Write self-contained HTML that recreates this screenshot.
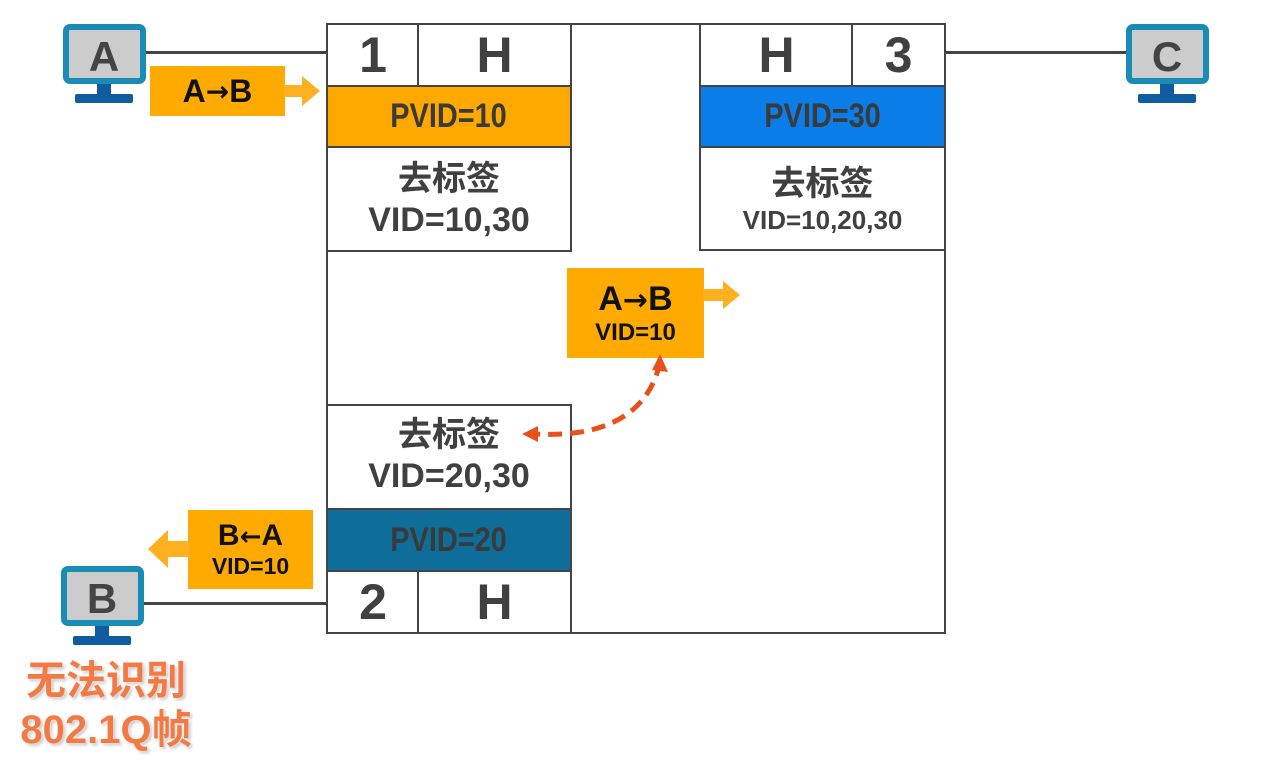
<!DOCTYPE html><html><head><meta charset="utf-8"><style>
body{margin:0;width:1270px;height:768px;background:#fff;position:relative;overflow:hidden;font-family:"Liberation Sans","Noto Sans CJK SC",sans-serif}
.a{position:absolute;box-sizing:border-box}
.c{display:flex;align-items:center;justify-content:center;text-align:center}
.big{font-size:50px;font-weight:bold;color:#404040}
.pv{font-size:34px;color:#3a3a3a;transform:scaleX(.85);font-weight:bold;display:inline-block}
.t{color:#404040;font-weight:bold;line-height:1.2}
.tag{background:#FFAA00;color:#111;font-weight:bold}
.ar{font-family:"DejaVu Sans",sans-serif;font-weight:bold}
</style></head><body>
<div class="a" style="left:140px;top:51px;width:190px;height:3px;background:#444"></div>
<div class="a" style="left:943px;top:51px;width:190px;height:3px;background:#444"></div>
<div class="a" style="left:138px;top:602px;width:192px;height:3px;background:#444"></div>
<div class="a" style="left:326px;top:23px;width:620px;height:611px;border:2px solid #444"></div>
<div class="a" style="left:326px;top:23px;width:246px;height:229px;border:2px solid #444;background:#fff"></div>
<div class="a c big" style="left:328px;top:25px;width:90px;height:60px">1</div>
<div class="a" style="left:417px;top:25px;width:2px;height:60px;background:#444"></div>
<div class="a c big" style="left:419px;top:25px;width:151px;height:60px">H</div>
<div class="a c" style="left:326px;top:85px;width:246px;height:63px;background:#FFA800;border:2px solid #444"><span class="pv">PVID=10</span></div>
<div class="a c t" style="left:328px;top:152px;width:242px;height:96px;font-size:34px;flex-direction:column"><div>去标签</div><div>VID=10,30</div></div>
<div class="a" style="left:699px;top:23px;width:247px;height:228px;border:2px solid #444;background:#fff"></div>
<div class="a c big" style="left:701px;top:25px;width:151px;height:60px">H</div>
<div class="a" style="left:851px;top:25px;width:2px;height:60px;background:#444"></div>
<div class="a c big" style="left:853px;top:25px;width:91px;height:60px">3</div>
<div class="a c" style="left:699px;top:85px;width:247px;height:63px;background:#0A7DE8;border:2px solid #444"><span class="pv">PVID=30</span></div>
<div class="a c t" style="left:701px;top:155px;width:243px;height:90px;flex-direction:column"><div style="font-size:34px">去标签</div><div style="font-size:26px">VID=10,20,30</div></div>
<div class="a" style="left:326px;top:404px;width:246px;height:230px;border:2px solid #444;background:#fff"></div>
<div class="a c t" style="left:328px;top:408px;width:242px;height:96px;font-size:34px;flex-direction:column"><div>去标签</div><div>VID=20,30</div></div>
<div class="a c" style="left:326px;top:508px;width:246px;height:64px;background:#0E6E99;border:2px solid #444"><span class="pv">PVID=20</span></div>
<div class="a c big" style="left:328px;top:572px;width:90px;height:60px">2</div>
<div class="a" style="left:417px;top:572px;width:2px;height:60px;background:#444"></div>
<div class="a c big" style="left:419px;top:572px;width:151px;height:60px">H</div>
<div class="a c tag" style="left:150px;top:66px;width:135px;height:50px;font-size:32px">A<span class="ar" style="font-size:28px">→</span>B</div>
<svg class="a" style="left:284px;top:76px" width="40" height="30"><path d="M0 9H18V0L36 15 18 30V21H0Z" fill="#FFB020"/></svg>
<div class="a c tag" style="left:567px;top:268px;width:137px;height:90px;flex-direction:column"><div style="font-size:34px">A<span class="ar" style="font-size:30px">→</span>B</div><div style="font-size:24px">VID=10</div></div>
<svg class="a" style="left:703px;top:281px" width="40" height="28"><path d="M0 8H20V0L37 14 20 28V20H0Z" fill="#FFB020"/></svg>
<div class="a c tag" style="left:188px;top:510px;width:125px;height:79px;flex-direction:column"><div style="font-size:30px">B<span class="ar" style="font-size:26px">←</span>A</div><div style="font-size:23px">VID=10</div></div>
<svg class="a" style="left:148px;top:530px" width="42" height="38"><path d="M42 11H20V0L0 19 20 38V27H42Z" fill="#FFB020"/></svg>
<svg class="a" style="left:510px;top:350px" width="170" height="100"><path d="M150 12 C140 60 100 88 26 84" fill="none" stroke="#E8501C" stroke-width="5" stroke-dasharray="14 8"/><path d="M150 4 L158 22 L142 20Z" fill="#E8501C"/><path d="M12 84 L28 76 L28 92Z" fill="#E8501C"/></svg>
<svg class="a" style="left:63px;top:24px" width="85" height="84"><rect x="3" y="3" width="77" height="54" rx="4" fill="#ccc" stroke="#1A8BB5" stroke-width="6"/><text x="41" y="47" text-anchor="middle" font-family="Liberation Sans" font-weight="bold" font-size="42" fill="#444">A</text><rect x="34" y="60" width="14" height="12" fill="#0F5C9E"/><rect x="12" y="70" width="58" height="9" rx="2" fill="#0F5C9E"/></svg>
<svg class="a" style="left:1126px;top:24px" width="85" height="84"><rect x="3" y="3" width="77" height="54" rx="4" fill="#ccc" stroke="#1A8BB5" stroke-width="6"/><text x="41" y="47" text-anchor="middle" font-family="Liberation Sans" font-weight="bold" font-size="42" fill="#444">C</text><rect x="34" y="60" width="14" height="12" fill="#0F5C9E"/><rect x="12" y="70" width="58" height="9" rx="2" fill="#0F5C9E"/></svg>
<svg class="a" style="left:61px;top:566px" width="85" height="84"><rect x="3" y="3" width="77" height="54" rx="4" fill="#ccc" stroke="#1A8BB5" stroke-width="6"/><text x="41" y="47" text-anchor="middle" font-family="Liberation Sans" font-weight="bold" font-size="42" fill="#444">B</text><rect x="34" y="60" width="14" height="12" fill="#0F5C9E"/><rect x="12" y="70" width="58" height="9" rx="2" fill="#0F5C9E"/></svg>
<div class="a c" style="left:0;top:656px;width:212px;height:100px;flex-direction:column;font-weight:bold;color:#F47A45;font-size:40px;line-height:49px;text-shadow:0 0 3px #fff,2px 2px 3px #bbb"><div>无法识别</div><div>802.1Q帧</div></div>
</body></html>
